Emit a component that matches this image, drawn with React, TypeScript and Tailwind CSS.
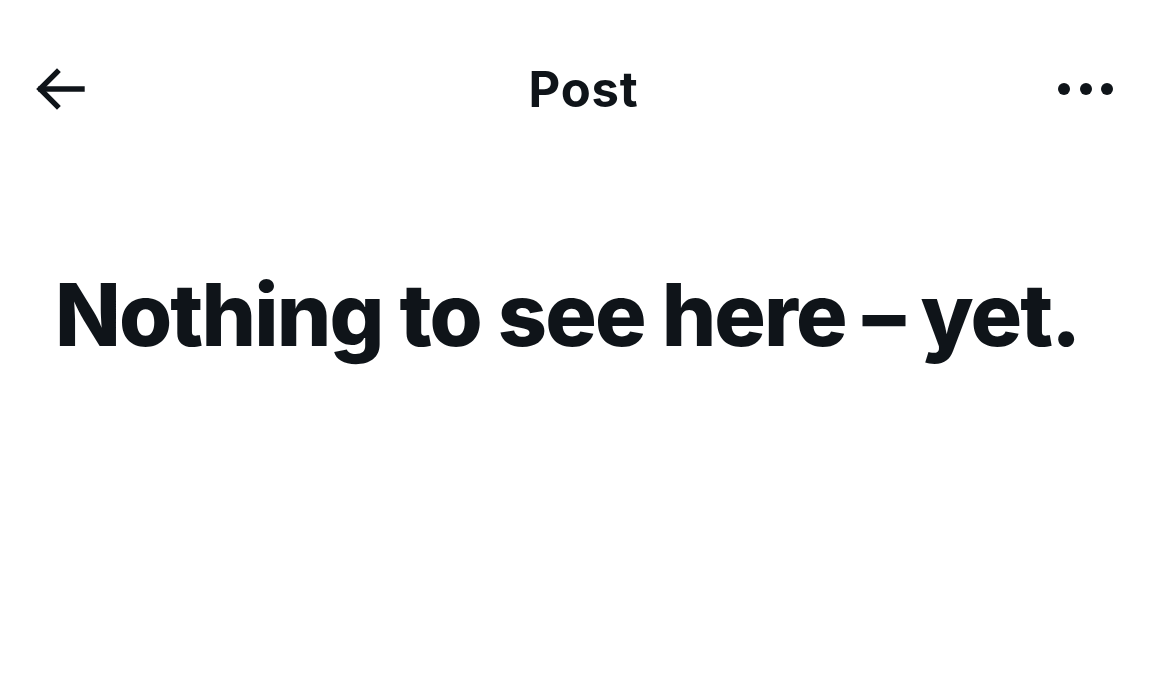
export default function App() {
  return (
    <div
      className="h-[688px] w-[1170px] bg-white text-[#0f1419]"
      style={{ fontFamily: "Inter, 'Liberation Sans', sans-serif" }}
    >
      <header className="grid h-[178px] grid-cols-[1fr_auto_1fr] items-center pl-[35px] pr-[57px]">
        <button className="flex h-[46px] w-[50px] items-center">
          <svg width="50" height="46" viewBox="0 0 50 46" fill="none" stroke="#0f1419" strokeWidth="5.4" strokeLinecap="square">
            <path d="M47 23H6" />
            <path d="M22 6L5 23l17 17" />
          </svg>
        </button>
        <h1 className="ml-[19px] text-[49px] font-bold leading-none tracking-[0.8px]">Post</h1>
        <button className="flex h-[20px] w-[55px] items-center justify-between justify-self-end">
          <span className="h-[12px] w-[12px] rounded-full bg-[#0f1419]" />
          <span className="h-[12px] w-[12px] rounded-full bg-[#0f1419]" />
          <span className="h-[12px] w-[12px] rounded-full bg-[#0f1419]" />
        </button>
      </header>
      <main className="px-[55px] pt-[94px]">
        <p className="text-[86px] font-extrabold leading-none tracking-[-1.9px]">Nothing to see here – yet.</p>
      </main>
    </div>
  );
}
